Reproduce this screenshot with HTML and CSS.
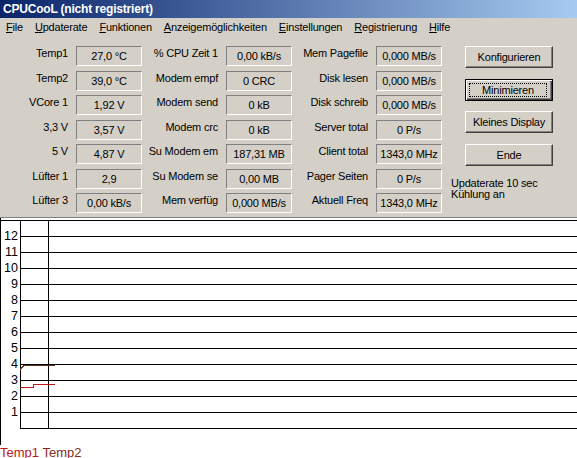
FILE: index.html
```html
<!DOCTYPE html>
<html lang="de">
<head>
<meta charset="utf-8">
<title>CPUCooL</title>
<link rel="stylesheet" href="styles.css">
</head>
<body>
<div class="window">
  <div class="titlebar">CPUCooL (nicht registriert)</div>
  <div class="menubar">
    <span class="menu-item"><u>F</u>ile</span>
    <span class="menu-item"><u>U</u>pdaterate</span>
    <span class="menu-item"><u>F</u>unktionen</span>
    <span class="menu-item"><u>A</u>nzeigemöglichkeiten</span>
    <span class="menu-item"><u>E</u>instellungen</span>
    <span class="menu-item"><u>R</u>egistrierung</span>
    <span class="menu-item"><u>H</u>ilfe</span>
  </div>
  <div class="panel">
    <div class="side">
      <div class="btn">Konfigurieren</div>
      <div class="btn btn-default"><span class="focus">Minimieren</span></div>
      <div class="btn">Kleines Display</div>
      <div class="btn">Ende</div>
      <div class="status">Updaterate 10 sec<br>Kühlung an</div>
    </div>

    <span class="lbl">Temp1</span><span class="field">27,0 °C</span>
    <span class="lbl">% CPU Zeit 1</span><span class="field">0,00 kB/s</span>
    <span class="lbl">Mem Pagefile</span><span class="field">0,000 MB/s</span>

    <span class="lbl">Temp2</span><span class="field">39,0 °C</span>
    <span class="lbl">Modem empf</span><span class="field">0 CRC</span>
    <span class="lbl">Disk lesen</span><span class="field">0,000 MB/s</span>

    <span class="lbl">VCore 1</span><span class="field">1,92 V</span>
    <span class="lbl">Modem send</span><span class="field">0 kB</span>
    <span class="lbl">Disk schreib</span><span class="field">0,000 MB/s</span>

    <span class="lbl">3,3 V</span><span class="field">3,57 V</span>
    <span class="lbl">Modem crc</span><span class="field">0 kB</span>
    <span class="lbl">Server total</span><span class="field">0 P/s</span>

    <span class="lbl">5 V</span><span class="field">4,87 V</span>
    <span class="lbl">Su Modem em</span><span class="field">187,31 MB</span>
    <span class="lbl">Client total</span><span class="field">1343,0 MHz</span>

    <span class="lbl">Lüfter 1</span><span class="field">2,9</span>
    <span class="lbl">Su Modem se</span><span class="field">0,00 MB</span>
    <span class="lbl">Pager Seiten</span><span class="field">0 P/s</span>

    <span class="lbl">Lüfter 3</span><span class="field">0,00 kB/s</span>
    <span class="lbl">Mem verfüg</span><span class="field">0,000 MB/s</span>
    <span class="lbl">Aktuell Freq</span><span class="field">1343,0 MHz</span>
  </div>
  <div class="graph">
    <svg class="chart" width="577" height="227" viewBox="0 0 577 227" shape-rendering="crispEdges">
      <g stroke="#000" stroke-width="1">
        <line x1="0.5" y1="0" x2="0.5" y2="227"/>
        <line x1="0" y1="2.5" x2="577" y2="2.5"/>
        <line x1="20" y1="18.5" x2="577" y2="18.5"/>
        <line x1="20" y1="34.5" x2="577" y2="34.5"/>
        <line x1="20" y1="50.5" x2="577" y2="50.5"/>
        <line x1="20" y1="66.5" x2="577" y2="66.5"/>
        <line x1="20" y1="82.5" x2="577" y2="82.5"/>
        <line x1="20" y1="98.5" x2="577" y2="98.5"/>
        <line x1="20" y1="114.5" x2="577" y2="114.5"/>
        <line x1="20" y1="130.5" x2="577" y2="130.5"/>
        <line x1="20" y1="146.5" x2="577" y2="146.5"/>
        <line x1="20" y1="162.5" x2="577" y2="162.5"/>
        <line x1="20" y1="178.5" x2="577" y2="178.5"/>
        <line x1="20" y1="194.5" x2="577" y2="194.5"/>
        <line x1="20" y1="210.5" x2="577" y2="210.5"/>
        <line x1="20.5" y1="2" x2="20.5" y2="211"/>
        <line x1="48.5" y1="2" x2="48.5" y2="211"/>
      </g>
      <g class="axis" text-anchor="end">
        <text x="18" y="22">12</text>
        <text x="18" y="38">11</text>
        <text x="18" y="54">10</text>
        <text x="18" y="70">9</text>
        <text x="18" y="86">8</text>
        <text x="18" y="102">7</text>
        <text x="18" y="118">6</text>
        <text x="18" y="134">5</text>
        <text x="18" y="150">4</text>
        <text x="18" y="166">3</text>
        <text x="18" y="182">2</text>
        <text x="18" y="198">1</text>
      </g>
      <path d="M20 152.5 L21 150.5 L22 149.5 L24 147.5 L55 147.5" fill="none" stroke="#5a3018" stroke-width="1"/>
      <path d="M20 169.5 L33 169.5 L33 166.5 L55 166.5" fill="none" stroke="#c01818" stroke-width="1"/>
    </svg>
    <div class="legend"><span class="t1">Temp1</span> <span class="t2">Temp2</span></div>
  </div>
</div>
</body>
</html>
```

FILE: styles.css
```css
html, body {
  margin: 0;
  padding: 0;
}

body {
  width: 577px;
  height: 458px;
  overflow: hidden;
  background: #d4d0c8;
  color: #000;
  font-family: "Liberation Sans", Arial, sans-serif;
  font-size: 11px;
  letter-spacing: -0.2px;
}

.window {
  width: 577px;
  height: 458px;
  display: flex;
  flex-direction: column;
}

.titlebar {
  height: 18px;
  box-sizing: border-box;
  padding-left: 3px;
  background: linear-gradient(to right, #0a246a, #a6caf0);
  color: #fff;
  font-weight: bold;
  font-size: 12px;
  letter-spacing: -0.2px;
  line-height: 18px;
  white-space: nowrap;
}

.menubar {
  display: flex;
  height: 17px;
  line-height: 19px;
  overflow: hidden;
  white-space: nowrap;
}

.menu-item {
  padding: 0 6px;
}

.menu-item u {
  text-decoration: underline;
  text-underline-offset: 1px;
}

.panel {
  display: grid;
  grid-template-columns: 76px 66px 84px 66px 84px 66px 1fr;
  grid-template-rows: repeat(7, 20px);
  row-gap: 4.5px;
  height: 182px;
  box-sizing: border-box;
  padding: 11px 0 4px;
}

.lbl {
  text-align: right;
  padding-right: 8px;
  line-height: 15px;
  white-space: nowrap;
}

.field {
  box-sizing: border-box;
  height: 20px;
  border: 1px solid;
  border-color: #808080 #fff #fff #808080;
  text-align: center;
  line-height: 18px;
  white-space: nowrap;
  overflow: hidden;
}

.side {
  grid-column: 7;
  grid-row: 1 / span 7;
  display: flex;
  flex-direction: column;
  padding-left: 9px;
}

.btn {
  box-sizing: border-box;
  margin-left: 14px;
  margin-bottom: 10.5px;
  width: 88px;
  height: 22px;
  border: 1px solid;
  border-color: #fff #404040 #404040 #fff;
  box-shadow: inset -1px -1px 0 #808080;
  text-align: center;
  line-height: 20px;
  white-space: nowrap;
}

.btn-default {
  border: 1px solid #000;
  box-shadow: inset 1px 1px 0 #fff, inset -1px -1px 0 #404040, inset -2px -2px 0 #808080;
  padding: 3px 0 0 3px;
}

.focus {
  display: block;
  box-sizing: border-box;
  width: 78px;
  height: 14px;
  border: 1px dotted #000;
  text-align: center;
  line-height: 13px;
}

.status {
  margin-top: 2px;
  line-height: 11px;
  white-space: nowrap;
}

.graph {
  flex: 1;
  border-top: 1px solid #808080;
  background: #fff;
  overflow: hidden;
}

.chart {
  display: block;
}

.axis text {
  font-family: "Liberation Sans", Arial, sans-serif;
  font-size: 12.5px;
  letter-spacing: 0;
  fill: #000;
}

.legend {
  font-size: 13px;
  letter-spacing: 0;
  line-height: 15px;
  white-space: nowrap;
}

.legend .t1 {
  color: #c01818;
}

.legend .t2 {
  color: #8a2a1a;
}
```
